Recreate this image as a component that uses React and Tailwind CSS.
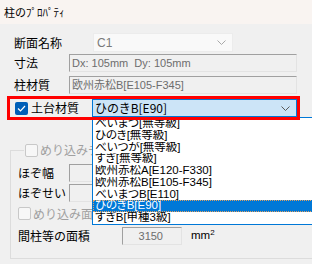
import React from "react";

function Chevron({ className }) {
  return (
    <svg width="9" height="5" viewBox="0 0 9 5" className={className}>
      <path d="M0.5 0.5 L4.5 4.5 L8.5 0.5" fill="none" stroke="currentColor" strokeWidth="1" />
    </svg>
  );
}

function Check({ checked, disabled }) {
  if (checked) {
    return (
      <div className="w-[13px] h-[13px] rounded-[2px] bg-[#005fb8] flex items-center justify-center shrink-0">
        <svg width="9" height="7" viewBox="0 0 9 7">
          <path d="M1 3.5 L3.5 6 L8 1" fill="none" stroke="white" strokeWidth="1.2" />
        </svg>
      </div>
    );
  }
  return (
    <div
      className={
        "w-[13px] h-[13px] rounded-[2px] border shrink-0 " +
        (disabled ? "border-[#c8c8c8] bg-[#f7f7f7]" : "border-[#333] bg-white")
      }
    />
  );
}

function Field({ className, children }) {
  return (
    <div
      className={
        "h-[18px] border border-t-[#a0a0a0] border-l-[#a0a0a0] border-b-[#e3e3e3] border-r-[#e3e3e3] bg-[#f0f0f0] text-[#6d6d6d] text-[11px] leading-[16px] flex items-center whitespace-nowrap [font-family:'Liberation_Sans','Noto_Sans_CJK_JP',sans-serif] " +
        (className || "")
      }
    >
      {children}
    </div>
  );
}

const items = [
  "べいまつ[無等級]",
  "ひのき[無等級]",
  "べいつが[無等級]",
  "すぎ[無等級]",
  "欧州赤松A[E120-F330]",
  "欧州赤松B[E105-F345]",
  "べいまつB[E110]",
  "ひのきB[E90]",
  "すぎB[甲種3級]",
];

export default function App() {
  return (
    <div className="w-[312px] h-[264px] overflow-hidden bg-[#f0f0f0] text-black [font-family:'Noto_Sans_CJK_JP','Noto_Sans',sans-serif]">
      {/* title bar */}
      <div className="h-[24px] bg-[#f9f4f1] flex items-center pl-[4px] text-[11px]">
        柱のﾌﾟﾛﾊﾟﾃｨ
      </div>

      {/* row 1 */}
      <div className="mt-[9px] h-[19px] flex items-center pl-[14px]">
        <div className="w-[79px] text-[12px]">断面名称</div>
        <div className="w-[140px] h-[19px] bg-[#f9f9f9] border border-[#ececec] flex items-center pl-[3px] pr-[6px] justify-between">
          <span className="text-[12px] text-[#7a7a7a] [font-family:'Liberation_Sans',sans-serif]">C1</span>
          <Chevron className="text-[#a8a8a8]" />
        </div>
      </div>

      {/* row 2 */}
      <div className="mt-[2px] h-[18px] flex items-center pl-[14px]">
        <div className="w-[55px] text-[12px]">寸法</div>
        <Field className="w-[228px] pl-[2px]">Dx: 105mm&nbsp;&nbsp;Dy: 105mm</Field>
      </div>

      {/* row 3 */}
      <div className="mt-[4px] h-[18px] flex items-center pl-[14px]">
        <div className="w-[55px] text-[12px]">柱材質</div>
        <Field className="w-[228px] pl-[2px]">欧州赤松B[E105-F345]</Field>
      </div>

      {/* highlighted row */}
      <div className="mt-[2px] ml-[7px] w-[293px] h-[24px] p-[3px] relative">
        <div className="h-[18px] flex items-center">
          <div className="ml-[5px] mr-[3px]">
            <Check checked />
          </div>
          <div className="w-[61px] text-[12px]">土台材質</div>
          <div className="relative w-[205px] h-[18px] border border-[#0078d7] bg-[#cce4f7] flex items-center justify-between pl-[2px] pr-[6px]">
            <span className="text-[12px] leading-[16px]">ひのきB[E90]</span>
            <Chevron className="text-[#5a5a5a]" />
            <div className="absolute left-[-1px] top-[17px] w-[240px] border border-[#0078d7] bg-white z-10 [font-feature-settings:'palt'] [font-family:'Liberation_Sans','Noto_Sans_CJK_JP',sans-serif]">
              {items.map((t, i) => (
                <div
                  key={i}
                  className={
                    "h-[11.75px] leading-[11.75px] text-[11.5px] pl-[2px] whitespace-nowrap overflow-hidden " +
                    (i === 7
                      ? "bg-[#0078d7] text-white outline outline-1 outline-dotted outline-[#e0a060] -outline-offset-1"
                      : "")
                  }
                >
                  {t}
                </div>
              ))}
            </div>
          </div>
        </div>
        <div className="absolute inset-0 border-[3px] border-[#ff0000] z-20 pointer-events-none" />
      </div>

      {/* group box */}
      <fieldset className="mt-[23px] ml-[10px] w-[330px] border border-[#dcdcdc] pl-[7px] pb-[13px] text-[12px]">
        <legend className="ml-[6px] px-[1px] flex items-center h-[14px]">
          <Check disabled />
          <span className="ml-[2px] text-[#a0a0a0]">めり込みチェック</span>
        </legend>
        <div className="mt-[7px] h-[18px] flex items-center">
          <div className="w-[51px]">ほぞ幅</div>
          <Field className="w-[60px]" />
        </div>
        <div className="mt-[2px] h-[18px] flex items-center">
          <div className="w-[51px]">ほぞせい</div>
          <Field className="w-[60px]" />
        </div>
        <div className="mt-[5px] h-[13px] flex items-center">
          <Check disabled />
          <span className="ml-[2px] text-[#a0a0a0]">めり込み面は</span>
        </div>
        <div className="mt-[7px] h-[18px] flex items-center">
          <div className="w-[104px]">間柱等の面積</div>
          <Field className="w-[60px] justify-end pr-[18px]">3150</Field>
          <div className="ml-[9px] text-[11.5px] [font-family:'Liberation_Sans',sans-serif]">
            mm<sup className="text-[8px]">2</sup>
          </div>
        </div>
      </fieldset>
    </div>
  );
}
